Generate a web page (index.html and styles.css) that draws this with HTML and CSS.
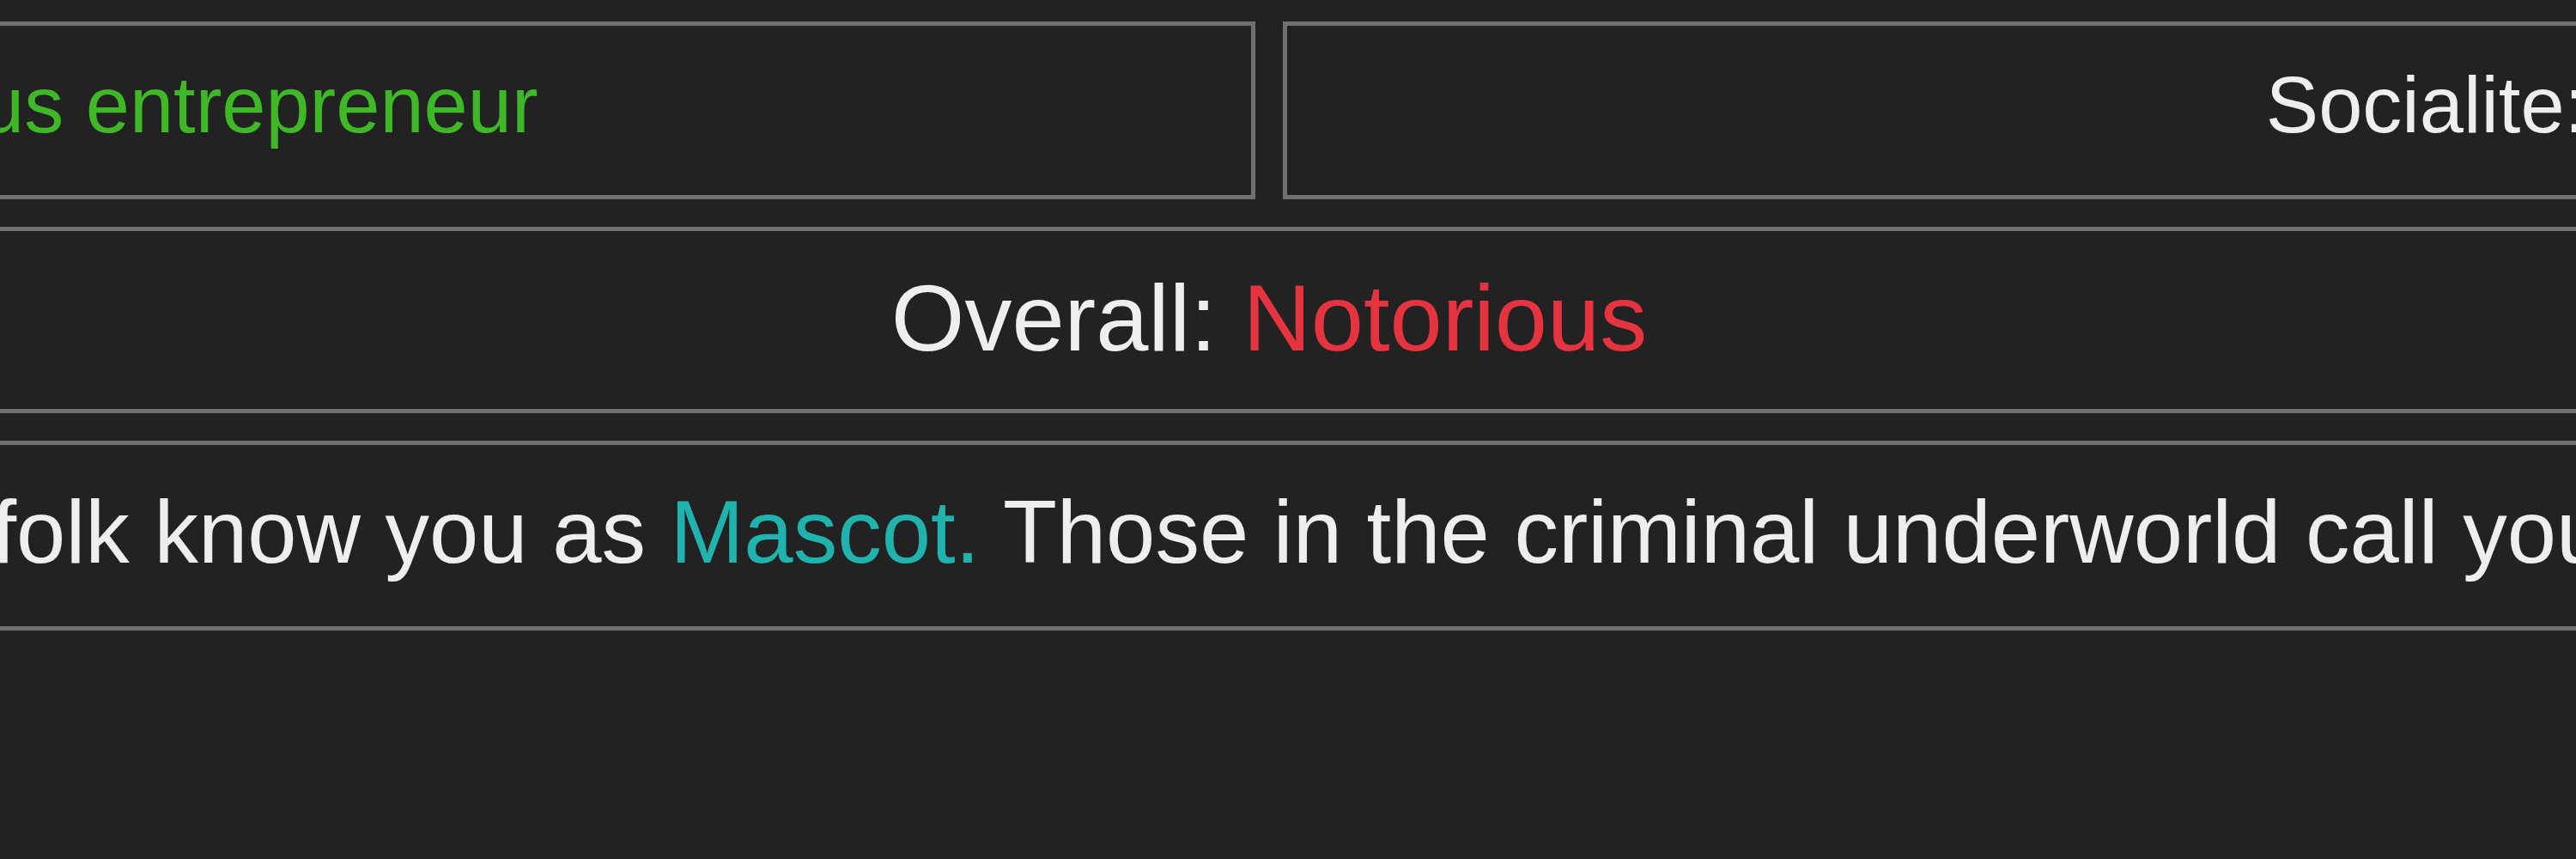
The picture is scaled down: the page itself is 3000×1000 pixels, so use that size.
FILE: index.html
```html
<!DOCTYPE html>
<html lang="en">
<head>
    <meta charset="UTF-8">
    <meta name="viewport" content="width=device-width, initial-scale=1.0">
    <title>Reputation</title>
    <link rel="stylesheet" href="styles.css">
</head>
<body>
    <div class="sheet">
        <div class="stats">
            <div class="stat">
                <span class="label">Industry:</span> <span class="good">Famous entrepreneur</span>
            </div>
            <div class="stat">
                <span class="label">Socialite:</span> <span class="good">Noted</span>
            </div>
        </div>
        <div class="overall">
            Overall: <span class="bad">Notorious</span>
        </div>
        <div class="bio">
            The townsfolk know you as <span class="alias">Mascot.</span> Those in the criminal underworld call you <span class="bad">the Owl.</span>
        </div>
    </div>
</body>
</html>
```

FILE: styles.css
```css
html, body {
    overflow: hidden;
}

body {
    font-family: 'Liberation Sans', Arial, sans-serif;
    margin: 0;
    padding-top: 25px;
    background: #222222;
    color: #eeeeee;
}

.sheet {
    display: flex;
    flex-direction: column;
    gap: 32px;
    width: 5900px;
    margin-left: -1472px;
}

.stats {
    display: grid;
    grid-template-columns: 1fr 1fr;
    gap: 32px;
}

.stat, .overall, .bio {
    border: 5px solid #707070;
    text-align: center;
    white-space: nowrap;
    line-height: 1.15;
}

.stat {
    font-size: 92px;
    padding: 40px 0 51px;
}

.overall {
    font-size: 110px;
    padding: 38px 0 43px;
}

.bio {
    font-size: 103px;
    padding: 43px 0 49px;
}

.good {
    color: #3fb827;
}

.bad {
    color: #e5333f;
}

.alias {
    color: #20b3ad;
}
```
